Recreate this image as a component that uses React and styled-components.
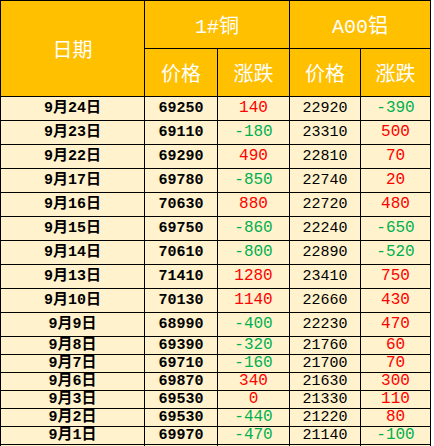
import React from "react";
import styled, { createGlobalStyle } from "styled-components";

const rows = [
  ["9月24日", 69250, 140, 22920, -390],
  ["9月23日", 69110, -180, 23310, 500],
  ["9月22日", 69290, 490, 22810, 70],
  ["9月17日", 69780, -850, 22740, 20],
  ["9月16日", 70630, 880, 22720, 480],
  ["9月15日", 69750, -860, 22240, -650],
  ["9月14日", 70610, -800, 22890, -520],
  ["9月13日", 71410, 1280, 23410, 750],
  ["9月10日", 70130, 1140, 22660, 430],
  ["9月9日", 68990, -400, 22230, 470],
  ["9月8日", 69390, -320, 21760, 60, true],
  ["9月7日", 69710, -160, 21700, 70, true],
  ["9月6日", 69870, 340, 21630, 300, true],
  ["9月3日", 69530, 0, 21330, 110, true],
  ["9月2日", 69530, -440, 21220, 80, true],
  ["9月1日", 69970, -470, 21140, -100, true],
];

const App = () => {
  return (
    <>
      <GlobalStyle />
      <Table>
        <colgroup>
          <col style={{ width: 144 }} />
          <col style={{ width: 73 }} />
          <col style={{ width: 72 }} />
          <col style={{ width: 71 }} />
          <col style={{ width: 70 }} />
        </colgroup>
        <thead>
          <tr>
            <HeadCell rowSpan={2}>日期</HeadCell>
            <HeadCell colSpan={2}>1#铜</HeadCell>
            <HeadCell colSpan={2}>A00铝</HeadCell>
          </tr>
          <tr>
            <HeadCell>价格</HeadCell>
            <HeadCell>涨跌</HeadCell>
            <HeadCell>价格</HeadCell>
            <HeadCell>涨跌</HeadCell>
          </tr>
        </thead>
        <tbody>
          {rows.map(([date, cu, cuChg, al, alChg, short]) => (
            <Row key={date} $short={short}>
              <DateCell>{date}</DateCell>
              <PriceCell $bold>{cu}</PriceCell>
              <ChangeCell $up={cuChg >= 0}>{cuChg}</ChangeCell>
              <PriceCell>{al}</PriceCell>
              <ChangeCell $up={alChg >= 0}>{alChg}</ChangeCell>
            </Row>
          ))}
          <Row $short>
            <DateCell />
            <PriceCell />
            <ChangeCell />
            <PriceCell />
            <ChangeCell />
          </Row>
        </tbody>
      </Table>
    </>
  );
};

const GlobalStyle = createGlobalStyle`
  html, body {
    margin: 0;
    padding: 0;
    background: #fff;
    height: 446px;
    overflow: hidden;
  }
`;

const Table = styled.table`
  border-collapse: collapse;
  table-layout: fixed;
  width: 431px;
  font-family: "Liberation Mono", "Noto Sans CJK SC", monospace;
  color: #000;
  td,
  th {
    border: 1px solid #000;
    padding: 0;
    text-align: center;
    vertical-align: middle;
  }
`;

const HeadCell = styled.th`
  background: #ffc000;
  color: #fff;
  font-size: 20px;
  font-weight: normal;
  height: 47px;
`;

const Row = styled.tr`
  background: #fff2cc;
  td {
    height: ${(p) => (p.$short ? "17px" : "23px")};
    line-height: 17px;
  }
`;

const DateCell = styled.td`
  font-size: 15px;
  font-weight: bold;
`;

const PriceCell = styled.td`
  font-size: 15px;
  font-weight: ${(p) => (p.$bold ? "bold" : "normal")};
`;

const ChangeCell = styled.td`
  font-size: 16px;
  color: ${(p) => (p.$up ? "#ff0000" : "#00b050")};
`;

export default App;
